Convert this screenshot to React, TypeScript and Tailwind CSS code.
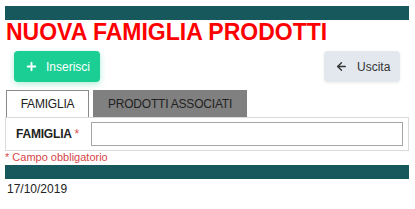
import { ArrowLeft, Plus } from "lucide-react";

export default function App() {
    return (
        <div className="w-[415px] h-[209px] bg-white pl-[5px] pr-[6px] pt-[6px] font-['Liberation_Sans',Arial,sans-serif] text-[#222]">
            <div className="h-[14px] bg-[#17585d]" />
            <h1 className="text-[23px] leading-[24px] font-bold text-[#ff0000] ml-px">NUOVA FAMIGLIA PRODOTTI</h1>

            <div className="mt-[7px] flex items-center justify-between pl-[9px] pr-[9px]">
                <button
                    type="button"
                    className="flex h-[31px] w-[86px] items-center gap-[8px] rounded-[4px] bg-[#1bce93] pl-[11px] text-[12px] text-white shadow-[0_2px_6px_rgba(27,206,147,0.35)]"
                >
                    <Plus size={13} strokeWidth={3.5} />
                    <span>Inserisci</span>
                </button>
                <button
                    type="button"
                    className="flex h-[31px] w-[76px] items-center gap-[9px] rounded-[4px] bg-[#e3e8ee] pl-[11px] text-[12px] text-[#333] shadow-[0_1px_3px_rgba(0,0,0,0.08)]"
                >
                    <ArrowLeft size={13} strokeWidth={2.5} />
                    <span>Uscita</span>
                </button>
            </div>

            <div className="mt-[8px] flex gap-[4px] pl-px">
                <div className="flex h-[27px] w-[83px] items-center justify-center border border-b-0 border-[#8a8a8a] bg-white text-[12px] tracking-[-0.2px] text-[#222]">
                    FAMIGLIA
                </div>
                <div className="flex h-[27px] w-[154px] items-center justify-center bg-[#808080] text-[12px] tracking-[-0.2px] text-[#222]">
                    PRODOTTI ASSOCIATI
                </div>
            </div>

            <div className="flex h-[34px] items-center border border-[#dadada] pl-[10px] pr-[5px]">
                <label className="w-[75px] text-[12px] font-bold tracking-[-0.2px] text-[#222]">
                    FAMIGLIA <span className="font-normal text-[#d9534f]">*</span>
                </label>
                <input className="h-[24px] flex-1 border border-[#a6a6a6] bg-white outline-none" />
            </div>

            <p className="text-[11px] leading-[13px] text-[#d64545]">* Campo obbligatorio</p>

            <div className="mt-px h-[14px] bg-[#17585d]" />

            <p className="mt-[3px] ml-[2px] text-[12px] leading-[14px] text-[#222]">17/10/2019</p>
        </div>
    );
}
